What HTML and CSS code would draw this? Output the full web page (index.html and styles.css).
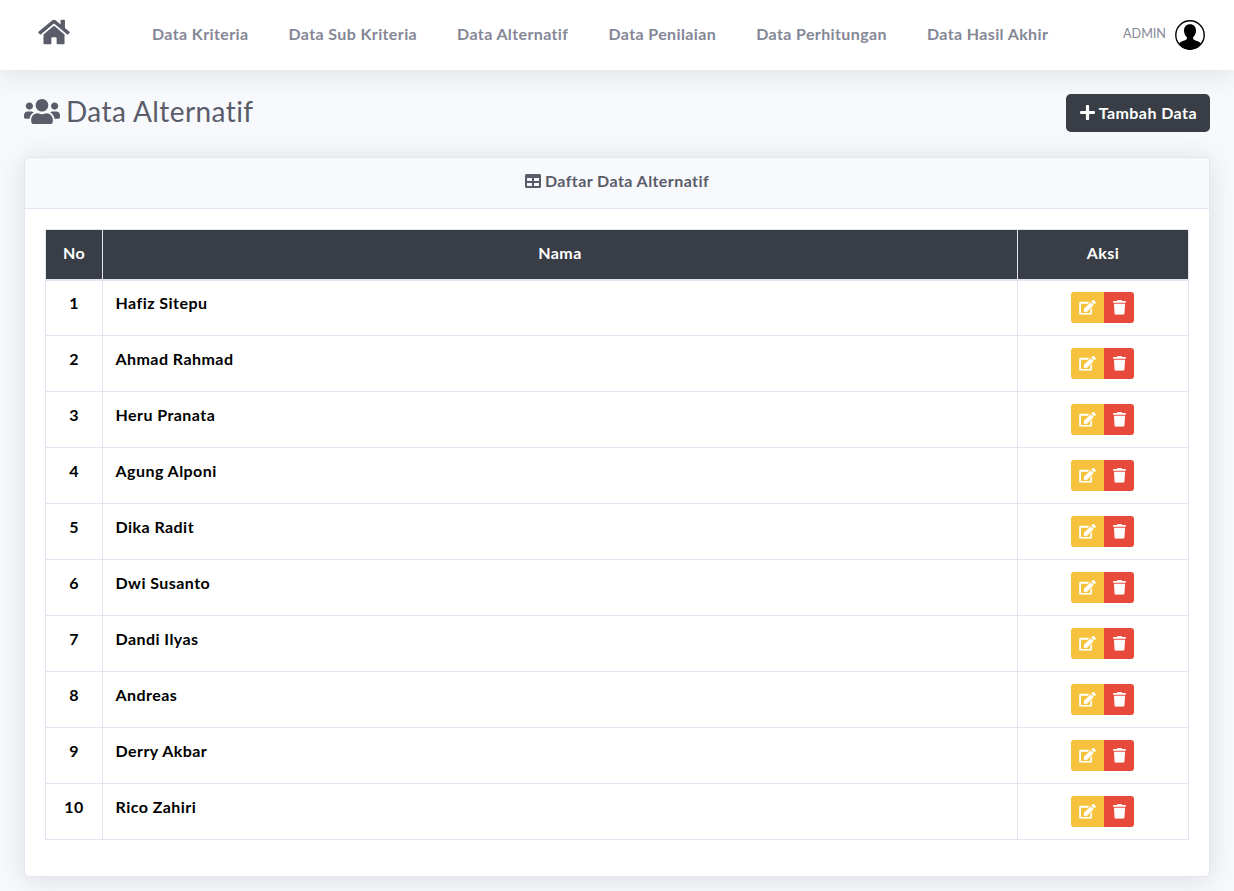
FILE: index.html
```html
<!doctype html>
<html>
<head>
	<meta charset="utf-8"/>
	<title>Data Alternatif</title>
	<link rel="stylesheet" href="styles.css">
</head>
<body>
	<svg class="defs" width="0" height="0">
		<symbol id="i-home" viewBox="0 0 576 512"><path d="M280.37 148.26L96 300.11V464a16 16 0 0 0 16 16l112.06-.29a16 16 0 0 0 15.92-16V368a16 16 0 0 1 16-16h64a16 16 0 0 1 16 16v95.64a16 16 0 0 0 16 16.05L464 480a16 16 0 0 0 16-16V300L295.67 148.26a12.19 12.19 0 0 0-15.3 0zM571.6 251.47L488 182.56V44.05a12 12 0 0 0-12-12h-56a12 12 0 0 0-12 12v72.61L318.47 43a48 48 0 0 0-61 0L4.34 251.47a12 12 0 0 0-1.6 16.9l25.5 31A12 12 0 0 0 45.15 301l235.22-193.74a12.19 12.19 0 0 1 15.3 0L530.9 301a12 12 0 0 0 16.9-1.6l25.5-31a12 12 0 0 0-1.7-16.93z"/></symbol>
		<symbol id="i-users" viewBox="0 0 640 512"><path d="M96 224c35.3 0 64-28.7 64-64s-28.7-64-64-64-64 28.7-64 64 28.7 64 64 64zm448 0c35.3 0 64-28.7 64-64s-28.7-64-64-64-64 28.7-64 64 28.7 64 64 64zm32 32h-64c-17.6 0-33.5 7.1-45.1 18.6 40.3 22.1 68.9 62 75.1 109.4h66c17.7 0 32-14.3 32-32v-32c0-35.3-28.7-64-64-64zm-256 0c61.9 0 112-50.1 112-112S381.9 32 320 32 208 82.1 208 144s50.1 112 112 112zm76.8 32h-8.3c-20.8 10-43.9 16-68.5 16s-47.6-6-68.5-16h-8.3C179.6 288 128 339.6 128 403.2V432c0 26.5 21.5 48 48 48h288c26.5 0 48-21.5 48-48v-28.8c0-63.6-51.6-115.2-115.2-115.2zm-223.7-13.4C161.5 263.1 145.6 256 128 256H64c-35.3 0-64 28.7-64 64v32c0 17.7 14.3 32 32 32h65.9c6.3-47.4 34.9-87.3 75.2-109.4z"/></symbol>
		<symbol id="i-plus" viewBox="0 0 448 512"><path d="M416 208H272V64c0-17.67-14.33-32-32-32h-32c-17.67 0-32 14.33-32 32v144H32c-17.67 0-32 14.33-32 32v32c0 17.67 14.33 32 32 32h144v144c0 17.67 14.33 32 32 32h32c17.67 0 32-14.33 32-32V304h144c17.67 0 32-14.33 32-32v-32c0-17.67-14.33-32-32-32z"/></symbol>
		<symbol id="i-table" viewBox="0 0 512 512"><path d="M464 32H48C21.49 32 0 53.49 0 80v352c0 26.51 21.49 48 48 48h416c26.51 0 48-21.49 48-48V80c0-26.51-21.49-48-48-48zM224 416H64v-96h160v96zm0-160H64v-96h160v96zm224 160H288v-96h160v96zm0-160H288v-96h160v96z"/></symbol>
		<symbol id="i-edit" viewBox="0 0 576 512"><path d="M402.6 83.2l90.2 90.2c3.8 3.8 3.8 10 0 13.8L274.4 405.6l-92.8 10.3c-12.4 1.4-22.9-9.1-21.5-21.5l10.3-92.8L388.8 83.2c3.8-3.8 10-3.8 13.8 0zm162-22.9l-48.8-48.8c-15.2-15.2-39.9-15.2-55.2 0l-35.4 35.4c-3.8 3.8-3.8 10 0 13.8l90.2 90.2c3.8 3.8 10 3.8 13.8 0l35.4-35.4c15.2-15.3 15.2-40 0-55.2zM384 346.2V448H64V128h229.8c3.2 0 6.2-1.3 8.5-3.5l40-40c7.6-7.6 2.2-20.5-8.5-20.5H48C21.5 64 0 85.5 0 112v352c0 26.5 21.5 48 48 48h352c26.5 0 48-21.5 48-48V306.2c0-10.7-12.9-16-20.5-8.5l-40 40c-2.2 2.3-3.5 5.3-3.5 8.5z"/></symbol>
		<symbol id="i-trash" viewBox="0 0 448 512"><path d="M432 32H312l-9.4-18.7A24 24 0 0 0 281.1 0H166.8a23.72 23.72 0 0 0-21.4 13.3L136 32H16A16 16 0 0 0 0 48v32a16 16 0 0 0 16 16h416a16 16 0 0 0 16-16V48a16 16 0 0 0-16-16zM53.2 467a48 48 0 0 0 47.9 45h245.8a48 48 0 0 0 47.9-45L416 128H32z"/></symbol>
	</svg>

	<nav class="topbar">
		<a class="brand" href="#"><svg class="ico-home"><use href="#i-home"/></svg></a>
		<ul class="menu">
			<li><a href="#">Data Kriteria</a></li>
			<li><a href="#">Data Sub Kriteria</a></li>
			<li><a href="#">Data Alternatif</a></li>
			<li><a href="#">Data Penilaian</a></li>
			<li><a href="#">Data Perhitungan</a></li>
			<li><a href="#">Data Hasil Akhir</a></li>
		</ul>
		<div class="user">
			<span class="user-name">ADMIN</span>
			<svg class="avatar" viewBox="0 0 30 30">
				<circle cx="15" cy="15" r="14.2" fill="#fff" stroke="#000" stroke-width="1.4"/>
				<path d="M15 4.2c-3.800 0-6 2.600-6 6.200 0 2.700 1.100 5.100 2.700 6.500.3.300.3 1.700-.1 2.400-.9 1.100-5 1.900-6.600 3.300-.5.400-.8 1-.9 1.500a13.500 13.500 0 0 0 21.800 0c-.1-.5-.4-1.100-.9-1.500-1.600-1.400-5.700-2.200-6.600-3.300-.4-.7-.4-2.100-.1-2.400 1.600-1.400 2.700-3.800 2.700-6.500 0-3.600-2.200-6.200-6-6.200z"/>
			</svg>
		</div>
	</nav>

	<main class="content">
		<div class="page-head">
			<h1 class="page-title"><svg class="ico-users"><use href="#i-users"/></svg> Data Alternatif</h1>
			<a class="btn-add" href="#"><svg class="ico-plus"><use href="#i-plus"/></svg> Tambah Data</a>
		</div>

		<section class="card">
			<header class="card-head"><svg class="ico-table"><use href="#i-table"/></svg> Daftar Data Alternatif</header>
			<div class="card-body">
				<table class="data">
					<thead>
						<tr><th class="col-no">No</th><th>Nama</th><th class="col-aksi">Aksi</th></tr>
					</thead>
					<tbody>
						<tr><td class="center">1</td><td>Hafiz Sitepu</td><td class="center"><div class="acts"><a class="act edit" href="#"><svg><use href="#i-edit"/></svg></a><a class="act del" href="#"><svg><use href="#i-trash"/></svg></a></div></td></tr>
						<tr><td class="center">2</td><td>Ahmad Rahmad</td><td class="center"><div class="acts"><a class="act edit" href="#"><svg><use href="#i-edit"/></svg></a><a class="act del" href="#"><svg><use href="#i-trash"/></svg></a></div></td></tr>
						<tr><td class="center">3</td><td>Heru Pranata</td><td class="center"><div class="acts"><a class="act edit" href="#"><svg><use href="#i-edit"/></svg></a><a class="act del" href="#"><svg><use href="#i-trash"/></svg></a></div></td></tr>
						<tr><td class="center">4</td><td>Agung Alponi</td><td class="center"><div class="acts"><a class="act edit" href="#"><svg><use href="#i-edit"/></svg></a><a class="act del" href="#"><svg><use href="#i-trash"/></svg></a></div></td></tr>
						<tr><td class="center">5</td><td>Dika Radit</td><td class="center"><div class="acts"><a class="act edit" href="#"><svg><use href="#i-edit"/></svg></a><a class="act del" href="#"><svg><use href="#i-trash"/></svg></a></div></td></tr>
						<tr><td class="center">6</td><td>Dwi Susanto</td><td class="center"><div class="acts"><a class="act edit" href="#"><svg><use href="#i-edit"/></svg></a><a class="act del" href="#"><svg><use href="#i-trash"/></svg></a></div></td></tr>
						<tr><td class="center">7</td><td>Dandi Ilyas</td><td class="center"><div class="acts"><a class="act edit" href="#"><svg><use href="#i-edit"/></svg></a><a class="act del" href="#"><svg><use href="#i-trash"/></svg></a></div></td></tr>
						<tr><td class="center">8</td><td>Andreas</td><td class="center"><div class="acts"><a class="act edit" href="#"><svg><use href="#i-edit"/></svg></a><a class="act del" href="#"><svg><use href="#i-trash"/></svg></a></div></td></tr>
						<tr><td class="center">9</td><td>Derry Akbar</td><td class="center"><div class="acts"><a class="act edit" href="#"><svg><use href="#i-edit"/></svg></a><a class="act del" href="#"><svg><use href="#i-trash"/></svg></a></div></td></tr>
						<tr><td class="center">10</td><td>Rico Zahiri</td><td class="center"><div class="acts"><a class="act edit" href="#"><svg><use href="#i-edit"/></svg></a><a class="act del" href="#"><svg><use href="#i-trash"/></svg></a></div></td></tr>
					</tbody>
				</table>
			</div>
		</section>
	</main>
</body>
</html>
```
FILE: styles.css
```css
html, body{
	margin: 0;
	height: 891px;
	overflow: hidden;
}
body{
	font-family: "Lato", "Open Sans", sans-serif;
	font-size: 16px;
	color: #858796;
	background: #f8f9fc;
}
a{
	color: inherit;
	text-decoration: none;
}
.defs{
	display: block;
	height: 0;
}
svg{
	fill: currentColor;
}

.topbar{
	display: flex;
	align-items: center;
	height: 70px;
	padding-left: 38px;
	padding-right: 29px;
	background: #fff;
	box-shadow: 0 2.4px 28px rgba(58,59,69,.15);
}
.brand{
	display: flex;
	color: #5a5c69;
	margin-top: -6px;
}
.ico-home{
	width: 32px;
	height: 28px;
}
.menu{
	display: flex;
	gap: 40px;
	list-style: none;
	margin: -4px 0 0 82px;
	padding: 0;
	font-size: 16px;
	font-weight: 700;
	letter-spacing: .38px;
}
.user{
	display: flex;
	align-items: center;
	gap: 9px;
	margin-left: auto;
}
.user-name{
	font-size: 12.6px;
	margin-top: -4px;
}
.avatar{
	width: 30px;
	height: 30px;
	fill: #000;
}

.content{
	padding: 24px 24px 0 24px;
}
.page-head{
	display: flex;
	justify-content: space-between;
	align-items: flex-start;
	margin-bottom: 25px;
}
.page-title{
	display: flex;
	align-items: center;
	gap: 7px;
	margin: 0;
	height: 34px;
	font-size: 28px;
	font-weight: 400;
	letter-spacing: .42px;
	color: #5a5c69;
}
.ico-users{
	width: 36px;
	height: 29px;
	margin-right: -1px;
}
.btn-add{
	display: flex;
	align-items: center;
	gap: 4px;
	height: 38px;
	padding: 0 13px 2px 13.5px;
	box-sizing: border-box;
	border-radius: 5px;
	background: #393e46;
	color: #fff;
	font-weight: 700;
	font-size: 16px;
	letter-spacing: .44px;
}
.ico-plus{
	width: 15px;
	height: 17px;
}

.card{
	background: #fff;
	border: 1px solid #e3e6f0;
	border-radius: 5px;
	box-shadow: 0 2.4px 28px rgba(58,59,69,.15);
	height: 720px;
	box-sizing: border-box;
}
.card-head{
	display: flex;
	align-items: center;
	justify-content: center;
	gap: 4px;
	height: 51px;
	padding-bottom: 5px;
	box-sizing: border-box;
	background: #f8f9fc;
	border-bottom: 1px solid #e3e6f0;
	border-radius: 5px 5px 0 0;
	color: #5a5c69;
	font-size: 16px;
	font-weight: 700;
	letter-spacing: .42px;
}
.ico-table{
	width: 16px;
	height: 16px;
}
.card-body{
	padding: 20px;
}

.data{
	width: 100%;
	border-collapse: collapse;
	table-layout: fixed;
	font-size: 16px;
	font-weight: 700;
	letter-spacing: .45px;
	color: #000;
}
.data th{
	height: 50px;
	padding: 0 0 3px;
	background: #393e46;
	color: #fff;
	border: 1px solid #e3e6f0;
	border-bottom-width: 2px;
	box-sizing: border-box;
}
.data td{
	height: 56px;
	padding: 0 12.5px 11px;
	border: 1px solid #e3e6f0;
	box-sizing: border-box;
}
.data td.center{
	text-align: center;
	padding: 0 0 11px;
}
.col-no{
	width: 57px;
}
.col-aksi{
	width: 171px;
}
.acts{
	display: flex;
	justify-content: center;
	margin-bottom: -11px;
	padding-right: 1px;
}
.act{
	display: flex;
	align-items: center;
	justify-content: center;
	height: 31px;
	color: #fff;
}
.act svg{
	width: 17px;
	height: 14.8px;
}
.edit{
	width: 33px;
	background: #f6c23e;
	border-radius: 3px 0 0 3px;
}
.del{
	width: 30px;
	background: #e74a3b;
	border-radius: 0 3px 3px 0;
}
```
